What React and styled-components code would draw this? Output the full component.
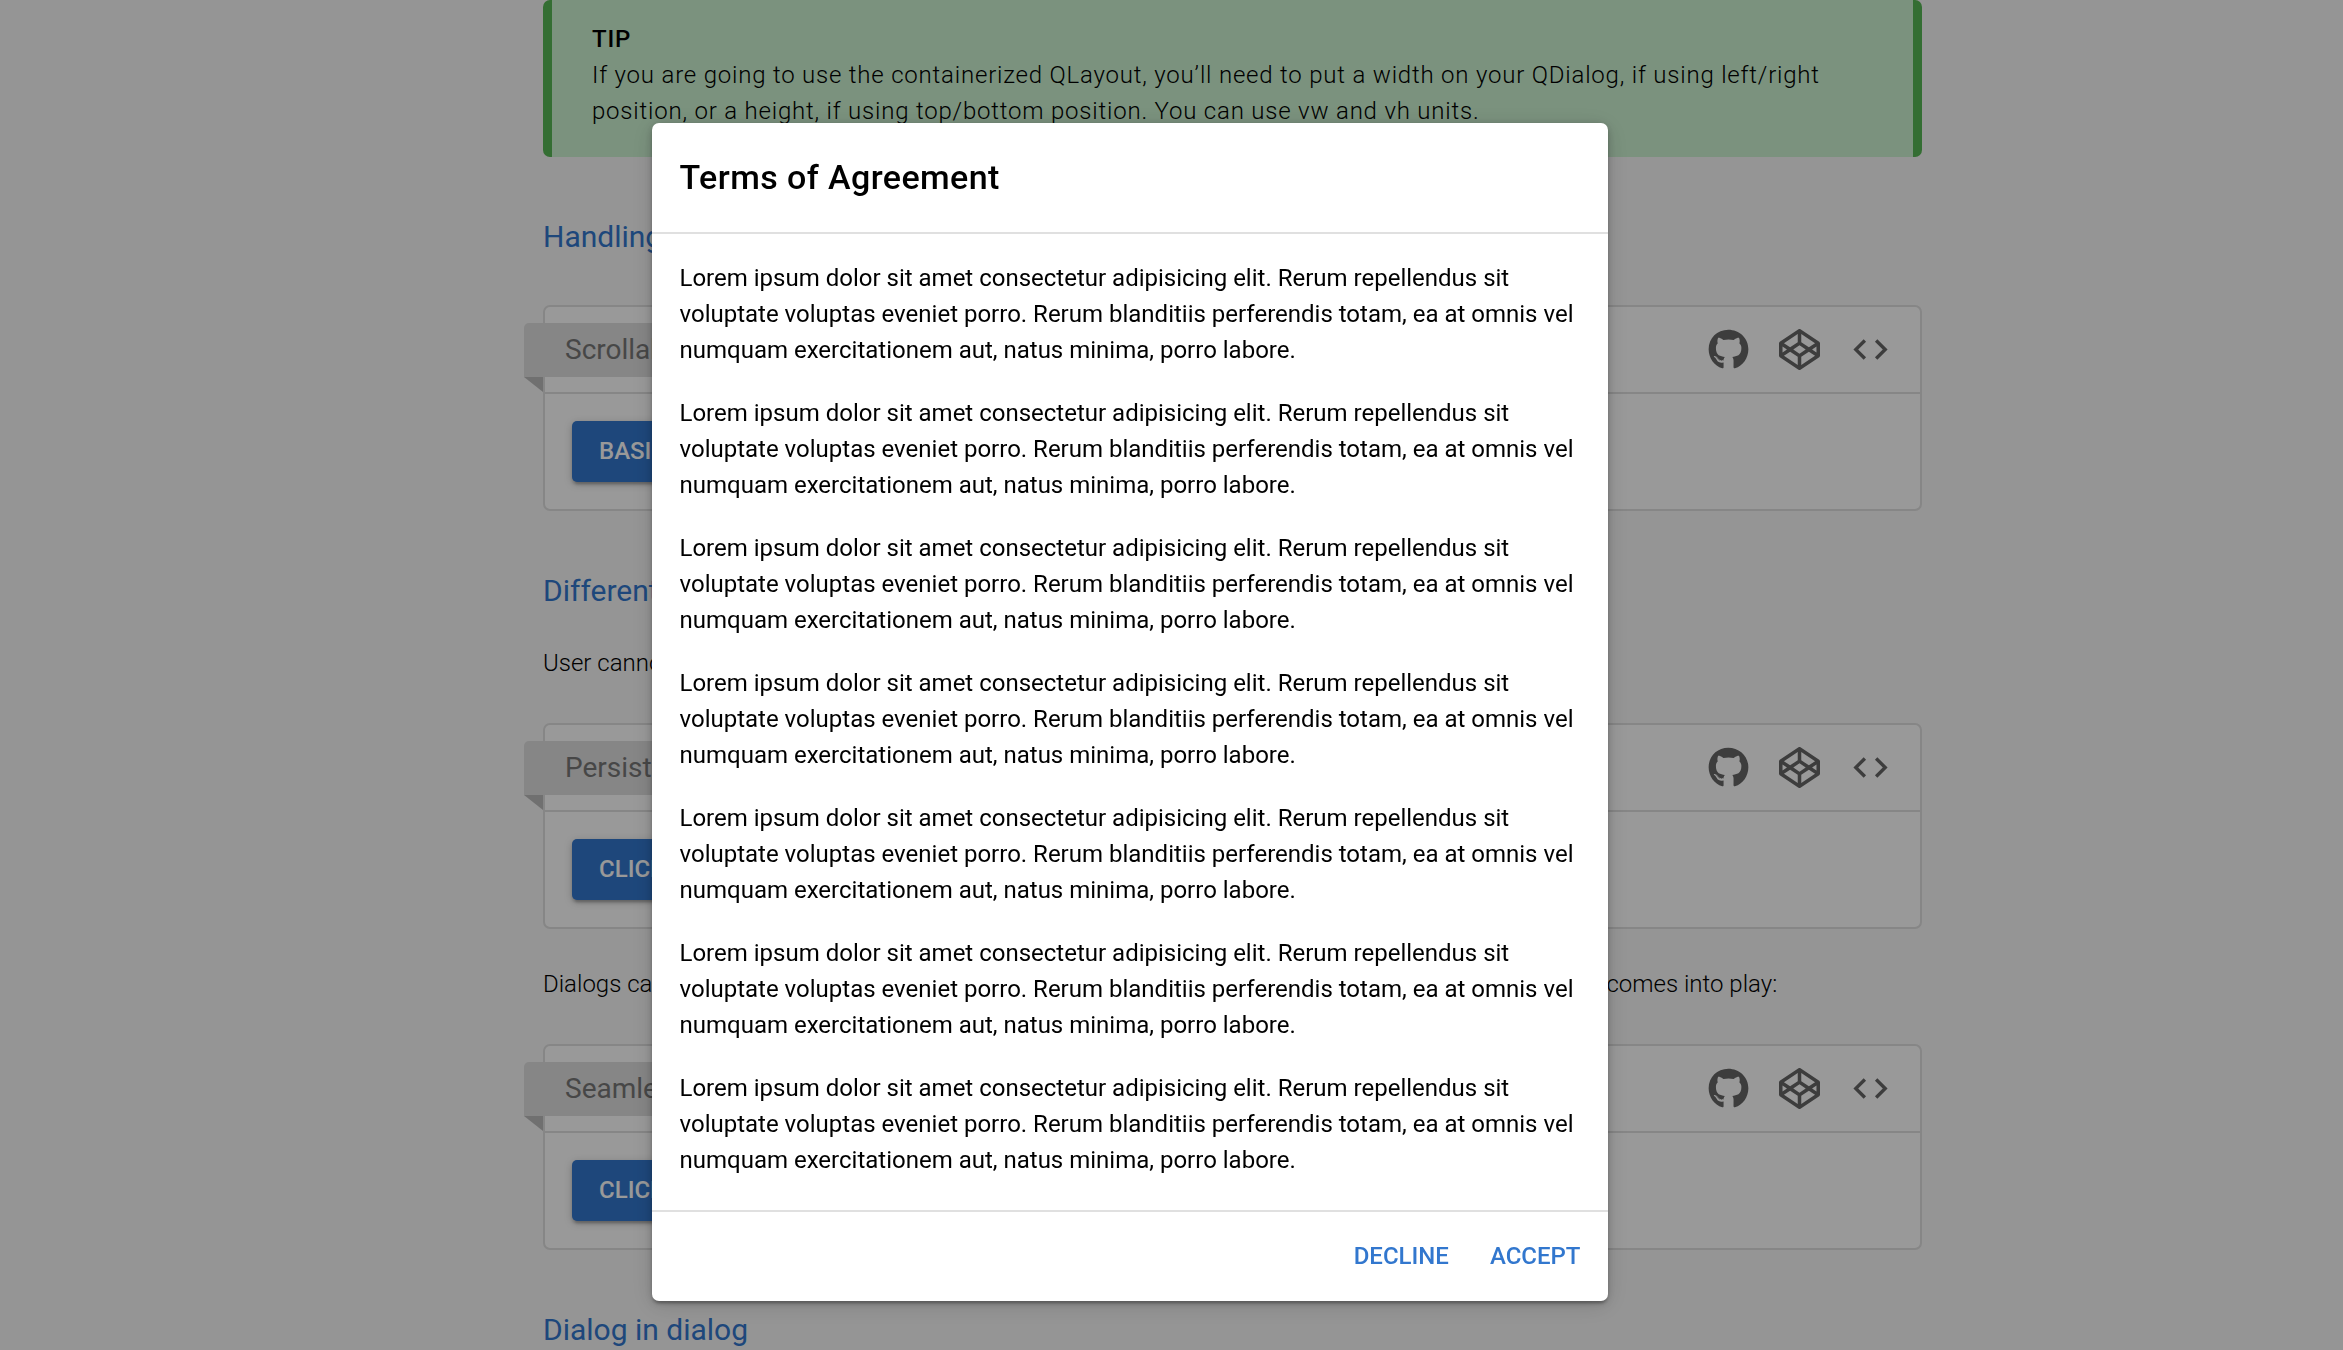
import React from "react";
import styled, { createGlobalStyle } from "styled-components";
import { FaGithub, FaCodepen } from "react-icons/fa";
import { MdCode } from "react-icons/md";

const GlobalStyle = createGlobalStyle`
  * {
    box-sizing: border-box;
  }
  body {
    margin: 0;
    height: 100vh;
    overflow: hidden;
    background: #f9f9f9;
    color: #000;
    font-family: Roboto, "Open Sans", sans-serif;
    font-size: 24px;
    line-height: 36px;
  }
  button {
    border: 0;
    font: inherit;
    cursor: pointer;
  }
`;

const Layout = styled.div`
  display: grid;
  grid-template-columns: 543px minmax(0, 1fr) 421px;
`;

const Page = styled.main`
  grid-column: 2;
  font-weight: 300;
`;

const Tip = styled.div`
  padding: 21px 40px 28px;
  background: #cdf3d2;
  border: solid #58b755;
  border-width: 0 9px;
  border-radius: 7px;
  letter-spacing: 0.033em;

  p {
    margin: 0;
  }
  .title {
    font-weight: 500;
  }
`;

const Heading = styled.h2`
  margin: 0;
  padding: 56px 0 44px;
  color: #3277ce;
  font-size: 30px;
  font-weight: 400;
  line-height: 48px;

  &:has(+ p) {
    padding-bottom: 30px;
  }
`;

const Text = styled.p`
  margin: 0;
  padding-bottom: 42px;
`;

const Card = styled.section`
  background: #fff;
  border: 2px solid #dfdfdf;
  border-radius: 7px;

  & + p {
    padding-top: 37px;
  }
`;

const CardBar = styled.div`
  display: flex;
  align-items: center;
  justify-content: space-between;
  height: 87px;
  padding-right: 29px;
  border-bottom: 2px solid #dfdfdf;
`;

const Ribbon = styled.div`
  position: relative;
  margin-left: -21px;
  padding: 0 41px;
  background: #dfdfdf;
  border-radius: 5px 5px 5px 0;
  color: #777;
  font-size: 28px;
  font-weight: 400;
  line-height: 54px;

  &::after {
    content: "";
    position: absolute;
    top: 100%;
    left: 0;
    border: solid transparent;
    border-width: 0 19px 15px 0;
    border-right-color: #bbb;
  }
`;

const Tools = styled.div`
  display: flex;
  gap: 30px;
`;

const IconButton = styled.button`
  display: flex;
  padding: 0;
  background: none;
  color: #666;
  font-size: 41px;
`;

const CardBody = styled.div`
  padding: 27px;
`;

const Button = styled.button`
  display: block;
  padding: 0 27px;
  background: #3277ce;
  border-radius: 5px;
  box-shadow: 0 2px 8px rgba(0, 0, 0, 0.2), 0 3px 3px rgba(0, 0, 0, 0.14),
    0 5px 2px -3px rgba(0, 0, 0, 0.12);
  color: #fff;
  font-weight: 500;
  line-height: 61px;
  text-transform: uppercase;
`;

const Backdrop = styled.div`
  position: fixed;
  inset: 0;
  display: flex;
  align-items: flex-start;
  justify-content: center;
  padding: 123px 84px 0 0;
  background: rgba(0, 0, 0, 0.4);
`;

const Dialog = styled.div`
  width: 100%;
  max-width: 956px;
  background: #fff;
  border-radius: 7px;
  box-shadow: 0 2px 8px rgba(0, 0, 0, 0.2), 0 3px 3px rgba(0, 0, 0, 0.14),
    0 5px 2px -3px rgba(0, 0, 0, 0.12), 0 4px 24px rgba(0, 0, 0, 0.14);

  h1 {
    margin: 0;
    padding: 27px 28px;
    font-size: 34px;
    font-weight: 500;
    letter-spacing: 0.0125em;
    line-height: 55px;
  }
`;

const Terms = styled.div`
  padding: 26px 28px 5px;
  border: solid #e0e0e0;
  border-width: 2px 0;

  p {
    margin: 0 0 27px;
  }
`;

const Actions = styled.div`
  display: flex;
  justify-content: flex-end;
  gap: 13px;
  padding: 14px 13px;
`;

const FlatButton = styled.button`
  padding: 0 14px;
  background: none;
  color: #3277ce;
  font-weight: 500;
  line-height: 61px;
  text-transform: uppercase;
`;

function Example({ title, action }) {
  return (
    <Card>
      <CardBar>
        <Ribbon>{title}</Ribbon>
        <Tools>
          <IconButton aria-label="GitHub">
            <FaGithub />
          </IconButton>
          <IconButton aria-label="Codepen">
            <FaCodepen />
          </IconButton>
          <IconButton aria-label="View source">
            <MdCode />
          </IconButton>
        </Tools>
      </CardBar>
      <CardBody>
        <Button>{action}</Button>
      </CardBody>
    </Card>
  );
}

function App() {
  return (
    <>
      <GlobalStyle />
      <Layout>
        <Page>
          <Tip>
            <p className="title">TIP</p>
            <p>
              If you are going to use the containerized QLayout, you’ll need to
              put a width on your QDialog, if using left/right position, or a
              height, if using top/bottom position. You can use vw and vh units.
            </p>
          </Tip>
          <Heading>Handling scroll</Heading>
          <Example title="Scrollable" action="Basic" />
          <Heading>Different modes</Heading>
          <Text>User cannot dismiss the Dialog by clicking outside of it.</Text>
          <Example title="Persistent" action="Click me" />
          <Text>
            Dialogs can also be a part of the page without requiring immediate
            focus. It's where "seamless" mode comes into play:
          </Text>
          <Example title="Seamless" action="Click me" />
          <Heading>Dialog in dialog</Heading>
        </Page>
      </Layout>
      <Backdrop>
        <Dialog role="dialog" aria-modal="true" aria-labelledby="terms-title">
          <h1 id="terms-title">Terms of Agreement</h1>
          <Terms>
            {[1, 2, 3, 4, 5, 6, 7].map((n) => (
              <p key={n}>
                Lorem ipsum dolor sit amet consectetur adipisicing elit. Rerum
                repellendus sit voluptate voluptas eveniet porro. Rerum
                blanditiis perferendis totam, ea at omnis vel numquam
                exercitationem aut, natus minima, porro labore.
              </p>
            ))}
          </Terms>
          <Actions>
            <FlatButton>Decline</FlatButton>
            <FlatButton>Accept</FlatButton>
          </Actions>
        </Dialog>
      </Backdrop>
    </>
  );
}

export default App;
